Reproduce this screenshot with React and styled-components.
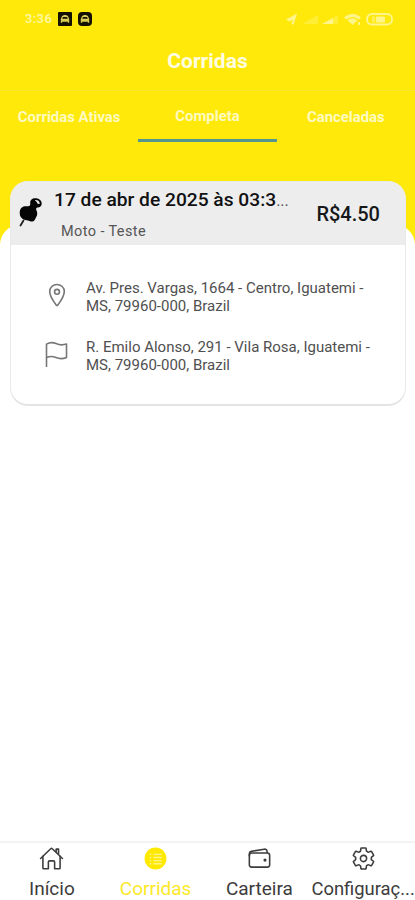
import { useState } from 'react';
import styled, { createGlobalStyle } from 'styled-components';
import {
  IoHomeOutline,
  IoLocationOutline,
  IoSettingsOutline,
  IoWalletOutline,
} from 'react-icons/io5';

const TABS = ['Corridas Ativas', 'Completa', 'Canceladas'];

const NAV_ITEMS = [
  { label: 'Início', icon: <IoHomeOutline /> },
  { label: 'Corridas', icon: <ListIcon /> },
  { label: 'Carteira', icon: <IoWalletOutline /> },
  { label: 'Configuraç...', icon: <IoSettingsOutline />, small: true },
];

const RIDE = {
  date: '17 de abr de 2025 às 03:3',
  type: 'Moto - Teste',
  price: 'R$4.50',
  from: ['Av. Pres. Vargas, 1664 - Centro, Iguatemi -', 'MS, 79960-000, Brazil'],
  to: ['R. Emilo Alonso, 291 - Vila Rosa, Iguatemi -', 'MS, 79960-000, Brazil'],
};

function TaxiIcon({ radius }) {
  return (
    <svg width="14" height="14" viewBox="0 0 14 14">
      <rect width="14" height="14" rx={radius} fill="#151100" />
      <path
        d="M5.4 3h3.2v.8h1.2l1.400 3.200v3.800H9.800v-1H4.200v1H2.800V7l1.400-3.200h1.200zM5 5l-.8 1.800h5.600L9 5z"
        fill="#d8cc55"
      />
    </svg>
  );
}

function StatusIcons() {
  return (
    <svg width="110" height="16" viewBox="0 0 110 16" fill="#fff58a">
      <path d="M1 8.500 12 2.500 8.500 14l-2.200-1.500 1.800-4-3.500 2z" />
      <path d="M17 13 33 4v9z" opacity=".35" />
      <path d="M37 13 53 4v9z" opacity=".35" />
      <path d="M37 13 48 7v6z" />
      <path d="M59 6.200q8.500-7 17 0l-2 2.300q-6.500-5-13 0zM62.500 9.200q5-4 10 0L67.500 14z" />
      <path d="M73 11h2v3h-2z" />
      <rect x="82" y="3" width="25" height="10.500" rx="5" fill="none" stroke="#fff58a" strokeWidth="1.900" />
      <rect x="87" y="5.500" width="3" height="6" opacity=".6" />
      <rect x="91" y="5.500" width="9" height="6" rx="1" />
    </svg>
  );
}

function PinIcon() {
  return (
    <svg width="24" height="30" viewBox="0 0 24 30">
      <path
        d="M11.200 6C11 3 13.500 1 17 1.300c3.500.3 6 2.700 5.700 5.700-.3 2.200-1.900 3.600-4.400 3.400-1.300.7-1.500 1.800-.7 3.300 1 2 .9 4.300-.4 6.300-.8 1.500-1.600 4.200-3.700 4.500-1.600.3-2.800-.8-4.700-1.100C5.400 23.200 2.200 21.700 1.200 19c-.8-2.400-.7-6 1-7.900 1.900-2.100 4.300-2 6.500-1.800 2.200.1 2.700-1 2.500-3.300z"
        fill="#050505"
      />
      <path d="M4.500 23.500 1.500 28.500" stroke="#222" strokeWidth="1.800" strokeLinecap="round" />
      <path d="M15.800 3.200q4-.6 5 3.200-1 1-2.400.2-.3-2.200-2.600-3.400z" fill="#e8e8e8" />
    </svg>
  );
}

function ListIcon() {
  return (
    <svg viewBox="0 0 24 24">
      <circle cx="12" cy="12" r="10.500" fill="#ffe900" />
      <path
        d="M6.500 8h1.500M10 8h8M6.500 11h1.500M10 11h8M6.500 14h1.500M10 14h8M6.500 17h1.500M10 17h8"
        stroke="#fff48a"
        strokeWidth="1.300"
      />
    </svg>
  );
}

function FlagIcon() {
  return (
    <svg width="26" height="26" viewBox="0 0 26 26" fill="none" stroke="#777" strokeWidth="1.600">
      <path
        d="M2.500 25.500V3.200Q7 .3 12 2.600t10.500.5V16.500Q17 18.800 12 16.600t-9.500.2"
        strokeLinecap="round"
        strokeLinejoin="round"
      />
    </svg>
  );
}

function Address({ icon, lines }) {
  return (
    <AddressRow>
      <AddressIcon>{icon}</AddressIcon>
      <AddressText>
        {lines.map(line => (
          <div key={line}>{line}</div>
        ))}
      </AddressText>
    </AddressRow>
  );
}

function App() {
  const [activeTab, setActiveTab] = useState('Completa');

  return (
    <Screen>
      <GlobalStyle />
      <StatusBar>
        <Clock>3:36</Clock>
        <TaxiIcon radius={1} />
        <TaxiIcon radius={4} />
        <StatusRight>
          <StatusIcons />
        </StatusRight>
      </StatusBar>
      <Title>Corridas</Title>
      <Tabs>
        {TABS.map(tab => (
          <Tab key={tab} $active={tab === activeTab} onClick={() => setActiveTab(tab)}>
            {tab}
          </Tab>
        ))}
      </Tabs>
      <Content>
        <Card>
          <CardHeader>
            <PinIcon />
            <RideInfo>
              <RideDate>
                {RIDE.date}
                <Dots>...</Dots>
              </RideDate>
              <RideType>{RIDE.type}</RideType>
            </RideInfo>
            <Price>{RIDE.price}</Price>
          </CardHeader>
          <Addresses>
            <Address icon={<IoLocationOutline />} lines={RIDE.from} />
            <Address icon={<FlagIcon />} lines={RIDE.to} />
          </Addresses>
        </Card>
      </Content>
      <BottomNav>
        {NAV_ITEMS.map(({ label, icon, small }) => (
          <NavItem key={label} $active={label === 'Corridas'} $small={small}>
            {icon}
            <span>{label}</span>
          </NavItem>
        ))}
      </BottomNav>
    </Screen>
  );
}

export default App;

const GlobalStyle = createGlobalStyle`
  * {
    box-sizing: border-box;
  }

  body {
    margin: 0;
    font-family: Roboto, sans-serif;
  }
`;

const Screen = styled.div`
  display: flex;
  flex-direction: column;
  width: 415px;
  height: 900px;
  overflow: hidden;
  background: #ffe90a;
`;

const StatusBar = styled.div`
  display: flex;
  align-items: center;
  gap: 6px;
  height: 32px;
  padding: 5px 20px 0 25px;
`;

const Clock = styled.span`
  width: 27px;
  font-size: 13px;
  font-weight: 500;
  letter-spacing: 0.4px;
  color: #fff9a8;
`;

const StatusRight = styled.div`
  display: flex;
  margin-left: auto;
`;

const Title = styled.h1`
  display: flex;
  align-items: center;
  justify-content: center;
  height: 59px;
  margin: 0;
  border-bottom: 1px solid #f8e62c;
  font-size: 21px;
  font-weight: 700;
  color: #fffde0;
`;

const Tabs = styled.div`
  display: grid;
  grid-template-columns: repeat(3, 1fr);
  height: 51px;
`;

const Tab = styled.div`
  display: flex;
  align-items: center;
  justify-content: center;
  border-bottom: 3px solid ${props => (props.$active ? '#569690' : 'transparent')};
  padding-top: ${props => (props.$active ? '1px' : '3px')};
  font-size: 14.9px;
  font-weight: 700;
  color: #fffbc0;
  cursor: pointer;
`;

const Content = styled.div`
  flex: 1;
  margin-top: 83px;
  padding: 0 9px 0 10px;
  border-radius: 20px 20px 0 0;
  background: #fff;
`;

const Card = styled.div`
  height: 225px;
  margin-top: -44px;
  border: 1px solid #e9e9e9;
  border-bottom: 2px solid #e4e4e4;
  border-radius: 18px;
  overflow: hidden;
  background: #fff;
`;

const CardHeader = styled.div`
  display: flex;
  height: 63px;
  padding: 15px 25px 0 8px;
  background: #ededee;
`;

const RideInfo = styled.div`
  flex: 1;
  margin: -9px 0 0 11px;
`;

const RideDate = styled.div`
  font-size: 19.2px;
  font-weight: 500;
  line-height: 24px;
  white-space: nowrap;
  color: #111;
`;

const Dots = styled.span`
  font-size: 16px;
  font-weight: 400;
  color: #555;
`;

const RideType = styled.div`
  margin: 10px 0 0 7px;
  font-size: 14.5px;
  letter-spacing: 0.4px;
  line-height: 18px;
  color: #555;
`;

const Price = styled.div`
  margin-top: 5px;
  font-size: 20px;
  font-weight: 500;
  line-height: 24px;
  color: #16181a;
`;

const Addresses = styled.div`
  display: flex;
  flex-direction: column;
  gap: 23px;
  padding: 34px 0 0 33px;
`;

const AddressRow = styled.div`
  display: flex;
  align-items: center;
`;

const AddressIcon = styled.div`
  display: flex;
  width: 42px;
  margin-bottom: 4px;
  font-size: 26px;
  color: #777;
`;

const AddressText = styled.div`
  font-size: 15px;
  line-height: 18px;
  white-space: nowrap;
  color: #505050;
`;

const BottomNav = styled.div`
  display: grid;
  grid-template-columns: repeat(4, 1fr);
  height: 59px;
  border-top: 2px solid #f3f3f3;
  background: #fff;
`;

const NavItem = styled.div`
  display: flex;
  flex-direction: column;
  align-items: center;
  min-width: 0;
  padding-top: 3px;
  font-size: ${props => (props.$small ? '18.4px' : '19px')};
  line-height: 24px;
  white-space: nowrap;
  color: ${props => (props.$active ? '#fbe92a' : '#3c3c3c')};

  svg {
    flex: none;
    width: 25px;
    height: 25px;
    margin-bottom: 6px;
  }
`;
